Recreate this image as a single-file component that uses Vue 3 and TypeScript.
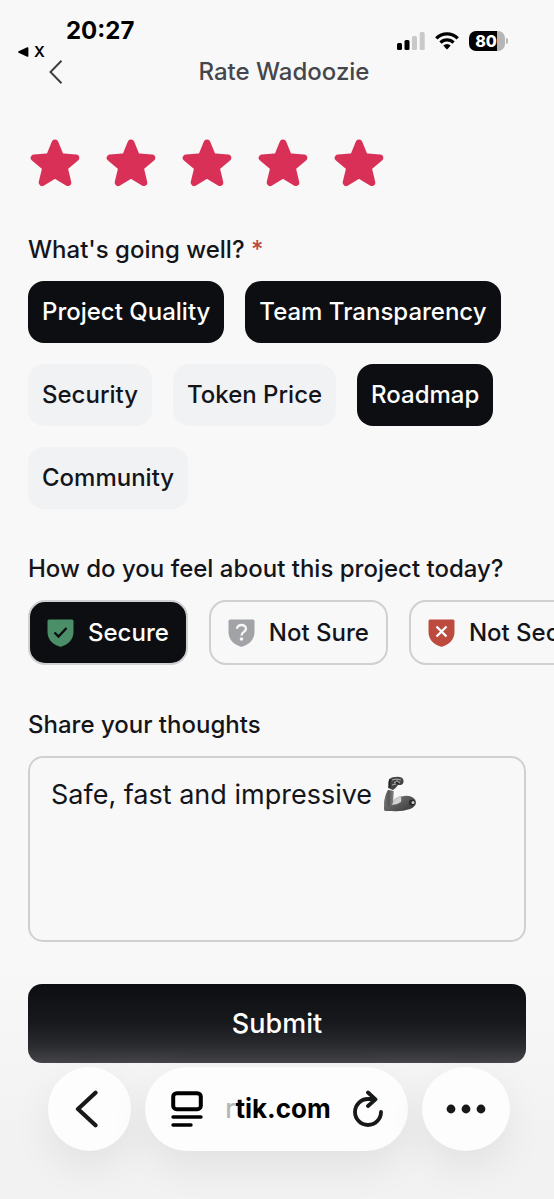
<script setup lang="ts">
import { ref } from 'vue'

type Feeling = 'secure' | 'unsure' | 'insecure'

const rating = ref(5)
const tags = ref([
  { label: 'Project Quality', on: true },
  { label: 'Team Transparency', on: true },
  { label: 'Security', on: false },
  { label: 'Token Price', on: false },
  { label: 'Roadmap', on: true },
  { label: 'Community', on: false },
])
const feelings: { id: Feeling; label: string }[] = [
  { id: 'secure', label: 'Secure' },
  { id: 'unsure', label: 'Not Sure' },
  { id: 'insecure', label: 'Not Secure' },
]
const feeling = ref<Feeling>('secure')
const thoughts = ref('Safe, fast and impressive')
</script>

<template>
  <div class="page">
    <div class="status">
      <div class="status-left">
        <span class="time">20:27</span>
        <a class="return" href="#">
          <svg width="11" height="10" viewBox="0 0 11 10" aria-hidden="true"><path d="M0.6 4.3 9.2.3Q10.4 0 10.4 1.1V8.9Q10.4 10 9.2 9.7L.6 5.7Q-.4 5 .6 4.3Z" /></svg>
          <span>X</span>
        </a>
      </div>
      <div class="status-right">
        <svg width="28" height="18" viewBox="0 0 28 18" aria-hidden="true">
          <rect x="0" y="11" width="5" height="7" rx="1.5" />
          <rect x="7.5" y="8" width="5" height="10" rx="1.5" />
          <rect x="15" y="4" width="5" height="14" rx="1.5" fill="#c9c9ca" />
          <rect x="22.700" y="0" width="5" height="18" rx="1.5" fill="#c9c9ca" />
        </svg>
        <svg width="24" height="18" viewBox="0 0 24 18" aria-hidden="true">
          <g fill="none" stroke="#000" stroke-width="3.300">
            <path d="M1.300 6.300a15.200 15.200 0 0 1 21.400 0" />
            <path d="M5.500 10.600a9.200 9.200 0 0 1 13 0" />
          </g>
          <path d="M8.300 13.400a5.300 5.300 0 0 1 7.400 0L12.600 17q-.6.600-1.200 0Z" />
        </svg>
        <span class="battery"><span class="cell">80</span><span class="nub"></span></span>
      </div>
    </div>

    <header class="header">
      <button class="back" type="button" aria-label="Back">
        <svg width="14" height="24" viewBox="0 0 14 24" fill="none" stroke="#3f4044" stroke-width="2" aria-hidden="true"><path d="M12.500 .8 1.500 12l11 11.200" /></svg>
      </button>
      <h1>Rate Wadoozie</h1>
      <span></span>
    </header>

    <form class="form" @submit.prevent>
      <div class="stars" role="radiogroup" aria-label="Rating">
        <label v-for="n in 5" :key="n" class="star" :class="{ lit: n <= rating }">
          <input v-model="rating" class="hidden-input" type="radio" name="rating" :value="n" :aria-label="n + ' stars'" />
          <svg width="50" height="48" viewBox="0 0 50 48" aria-hidden="true">
            <path stroke-width="7" stroke-linejoin="round" d="M25 4 30.600 17.800 45.800 18.900 34.200 28.600 37.800 43.500 25 35.700 12.200 43.500 15.800 28.600 4.200 18.900 19.400 17.800Z" />
          </svg>
        </label>
      </div>

      <h2 id="tags-title">What's going well? <span class="required">*</span></h2>
      <div class="tags" role="group" aria-labelledby="tags-title">
        <button v-for="t in tags" :key="t.label" type="button" class="tag" :class="{ on: t.on }" :aria-pressed="t.on" @click="t.on = !t.on">{{ t.label }}</button>
      </div>

      <h2 id="feel-title">How do you feel about this project today?</h2>
      <div class="feelings" role="radiogroup" aria-labelledby="feel-title">
        <label v-for="f in feelings" :key="f.id" class="feeling" :class="[f.id, { on: feeling === f.id }]">
          <input v-model="feeling" class="hidden-input" type="radio" name="feeling" :value="f.id" />
          <svg width="27" height="28" viewBox="0 0 27 28" fill="none" aria-hidden="true">
            <path class="shield" d="M2 .5H25Q26.500 .5 26.500 2V13C26.500 20 22 25 14.500 27.600Q13.500 28 12.500 27.600C5 25 .5 20 .5 13V2Q.5 .5 2 .5Z" />
            <path v-if="f.id === 'secure'" d="M7.500 13.500 11.500 17.500 19.500 9" stroke="#0d0e12" stroke-width="2.400" />
            <g v-else-if="f.id === 'unsure'">
              <path d="M9 9.800C9 4.700 18 4.700 18 9.800 18 13 13.500 12.800 13.500 16.500" stroke="#f8f8f8" stroke-width="2.300" />
              <circle cx="13.500" cy="20" r="1.800" fill="#f8f8f8" />
            </g>
            <path v-else d="M8.500 7.500 18.500 17.500M18.500 7.500 8.500 17.500" stroke="#fff" stroke-width="2.300" />
          </svg>
          <span>{{ f.label }}</span>
        </label>
      </div>

      <h2><label for="thoughts">Share your thoughts</label></h2>
      <div class="thoughts">
        <textarea id="thoughts" v-model="thoughts"></textarea>
        <svg class="arm" width="34" height="36" viewBox="0 0 34 36" role="img" aria-label="Flexed arm">
          <defs>
            <linearGradient id="upper" x1="0" y1="0" x2="1" y2="1">
              <stop offset="0" stop-color="#8b8b8b" /><stop offset=".5" stop-color="#606060" /><stop offset="1" stop-color="#333" />
            </linearGradient>
            <linearGradient id="lower" x1="0" y1="0" x2="1" y2="0">
              <stop offset="0" stop-color="#777" /><stop offset=".5" stop-color="#555" /><stop offset="1" stop-color="#858585" />
            </linearGradient>
          </defs>
          <path d="M5 14 10.500 15 10 26Q13 20 19 20.500 24 19 29 21 33 23 33 27 32 31 27 33 18 36 9 35L2 35Q.6 34 1 31 1 21 5 14Z" fill="url(#upper)" />
          <path d="M5 14 10.500 15 10 26 9 29Q5 30 1 31 1 21 5 14Z" fill="url(#lower)" />
          <path d="M9 29Q11 22 17 20.500 19 21 18 26 14 29 9 29Z" fill="#d2d2d2" />
          <path d="M5 12 5.500 5Q7 1 12 1 19 0 20.500 4 21 8 18 9L15 9Q13 12 10 14Z" fill="#444" />
          <path d="M9 4 14 3 18 4M11 7 14 5 17 7M9 9 13 8" fill="none" stroke="#aaa" stroke-width="1.200" />
          <path d="M7 3Q6 8 7 11M13 6 16 8" fill="none" stroke="#222" stroke-width="1.500" />
          <circle cx="29" cy="26.500" r="3" fill="#292929" /><circle cx="30" cy="26.500" r="1.500" fill="#ccc" />
        </svg>
      </div>

      <button class="submit" type="submit">Submit</button>
    </form>

    <nav class="toolbar" aria-label="Browser">
      <button class="tool round" type="button" aria-label="Go back">
        <svg width="24" height="38" viewBox="0 0 24 38" fill="none" stroke="#17181a" stroke-width="4.200" stroke-linecap="round" stroke-linejoin="round" aria-hidden="true"><path d="M20.500 2.800 3 19l17.500 16.200" /></svg>
      </button>
      <div class="tool address">
        <button type="button" aria-label="Page menu">
          <svg width="32" height="36" viewBox="0 0 32 36" fill="none" stroke="#000" stroke-linecap="round" aria-hidden="true">
            <rect x="2.200" y="2.200" width="27.600" height="16" rx="3.500" stroke-width="4" />
            <path d="M2 26H30M2 34H20" stroke-width="3.400" />
          </svg>
        </button>
        <a href="#" class="domain"><span class="faded">r</span>tik.com</a>
        <button type="button" aria-label="Reload">
          <svg width="30" height="38" viewBox="0 0 30 38" fill="none" stroke="#17181a" stroke-width="3.800" stroke-linecap="round" stroke-linejoin="round" aria-hidden="true">
            <path d="M28 22A13 13 0 1 1 15 9H21M15 2.500 22.500 9.300 15 16" />
          </svg>
        </button>
      </div>
      <button class="tool more" type="button" aria-label="More">
        <svg width="40" height="10" viewBox="0 0 40 10" fill="#17181a" aria-hidden="true"><circle cx="5" cy="5" r="4.400" /><circle cx="20" cy="5" r="4.400" /><circle cx="35" cy="5" r="4.400" /></svg>
      </button>
    </nav>
  </div>
</template>

<style>
body {
  margin: 0;
  background: #f8f8f8;
}
</style>

<style scoped>
.page {
  box-sizing: border-box;
  min-height: 100vh;
  overflow: hidden;
  background: linear-gradient(to top, #f2f2f2 0, #f2f2f2 60px, #f8f8f8 240px);
  color: #14151a;
  font-family: Inter, "Liberation Sans", sans-serif;
  font-size: 24px;
  line-height: 32px;
}
button, textarea {
  margin: 0;
  padding: 0;
  border: 0;
  background: none;
  color: inherit;
  font: inherit;
}
svg {
  display: block;
  flex: none;
}
a {
  color: inherit;
  text-decoration: none;
}
.status {
  display: flex;
  align-items: flex-start;
  justify-content: space-between;
  padding: 19px 46px 0 18px;
  color: #000;
}
.status-left {
  display: grid;
  gap: 1px;
}
.time {
  padding-left: 48px;
  font-size: 24px;
  font-weight: 700;
  line-height: 24px;
}
.return {
  display: flex;
  align-items: center;
  gap: 5px;
  font-size: 15px;
  font-weight: 600;
  line-height: 16px;
}
.status-right {
  display: flex;
  align-items: center;
  gap: 10px;
  height: 22px;
  margin-top: 11px;
}
.battery {
  display: flex;
  align-items: center;
  gap: 1px;
}
.cell {
  box-sizing: border-box;
  width: 36px;
  padding-right: 2px;
  border-radius: 7px;
  background: linear-gradient(to right, #000 78%, #b5b5b6 78%);
  color: #fff;
  font-size: 16px;
  font-weight: 800;
  line-height: 20px;
  text-align: center;
}
.nub {
  width: 2px;
  height: 6px;
  border-radius: 0 2px 2px 0;
  background: #b5b5b6;
}
.header {
  display: grid;
  grid-template-columns: 1fr auto 1fr;
  align-items: center;
  padding: 0 35px 0 49px;
}
.back {
  justify-self: start;
}
h1, h2 {
  margin: 0;
  font-size: 24px;
  font-weight: 450;
  line-height: 32px;
}
h1 {
  color: #45464b;
  line-height: 24px;
}
.form {
  padding: 55px 28px 0;
}
.stars {
  display: flex;
  gap: 26px;
  margin: 0 2px 47px;
}
.star, .feeling {
  position: relative;
}
.star svg {
  fill: #ddd;
  stroke: #ddd;
}
.star.lit svg {
  fill: #d93057;
  stroke: #d93057;
}
.hidden-input {
  position: absolute;
  inset: 0;
  width: 100%;
  height: 100%;
  margin: 0;
  opacity: 0;
}
.required {
  color: #bd4a3e;
}
.tags {
  display: flex;
  flex-wrap: wrap;
  gap: 21px;
  margin: 15px 0 44px;
}
.tag {
  height: 62px;
  padding: 0 14px;
  border-radius: 16px;
  background: #f1f2f4;
  font-weight: 450;
}
.tag.on {
  background: #0d0e12;
  color: #fff;
}
.feelings {
  display: flex;
  gap: 21px;
  margin: 15px -28px 44px 0;
  overflow-x: auto;
  scrollbar-width: none;
}
.feeling {
  display: flex;
  flex: none;
  align-items: center;
  gap: 14px;
  box-sizing: border-box;
  height: 65px;
  padding: 0 17px;
  border: 2px solid #d0d0d2;
  border-radius: 17px;
  font-weight: 500;
}
.feeling.on {
  background: #0d0e12;
  color: #fff;
}
.secure .shield { fill: #4b8f69; }
.unsure .shield { fill: #a2a3a7; }
.insecure .shield { fill: #bd4a3e; }
.thoughts {
  position: relative;
  margin: 15px 0 42px;
}
textarea {
  display: block;
  box-sizing: border-box;
  width: 100%;
  height: 186px;
  padding: 20px 21px;
  border: 2px solid #d0d0d2;
  border-radius: 15px;
  font-size: 27px;
  line-height: 34px;
  resize: none;
}
.arm {
  position: absolute;
  top: 20px;
  left: 355px;
}
.submit {
  display: block;
  width: 100%;
  height: 79px;
  border-radius: 14px;
  background: linear-gradient(#0d0e12, #18191d 50%, #2a2b2f 78%, #454549);
  color: #fff;
  font-size: 27px;
  font-weight: 500;
}
.toolbar {
  display: flex;
  gap: 14px;
  padding: 4px 44px 48px 48px;
}
.tool {
  display: flex;
  align-items: center;
  justify-content: center;
  height: 84px;
  border-radius: 42px;
  background: #fdfdfd;
  box-shadow: 0 16px 40px rgba(0, 0, 0, 0.07);
}
.round {
  width: 83px;
  padding-right: 6px;
}
.address {
  flex: 1;
  justify-content: space-between;
  box-sizing: border-box;
  padding: 0 25px 0 26px;
}
.more {
  width: 88px;
  border-radius: 50%;
}
.domain {
  color: #000;
  font-size: 26px;
  font-weight: 700;
}
.faded {
  color: #b5b5b6;
  font-weight: 500;
}
</style>
